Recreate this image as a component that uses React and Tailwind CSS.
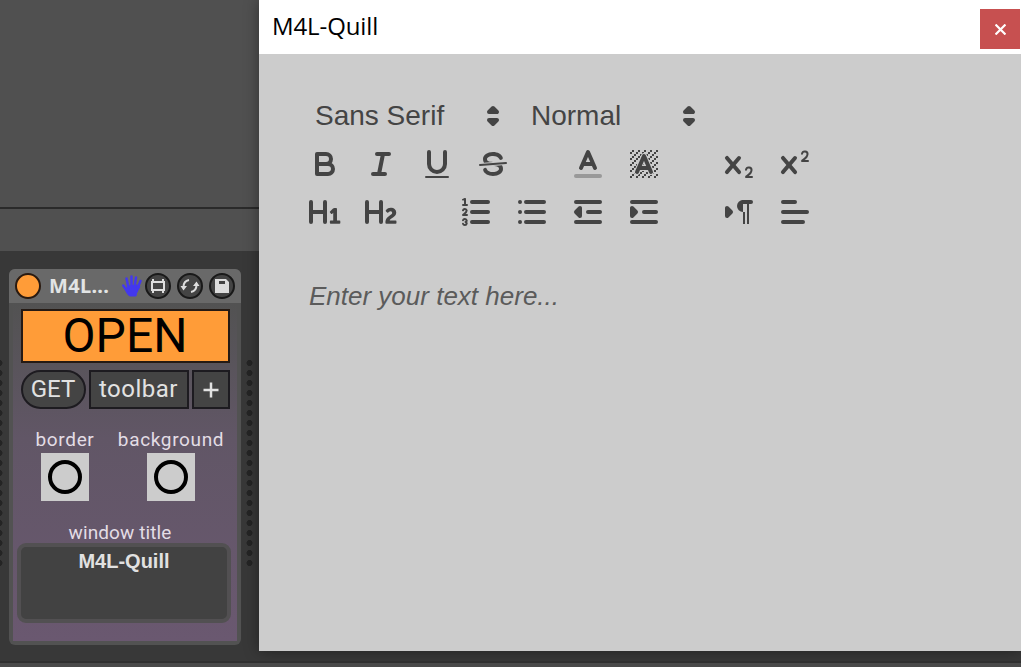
import React from "react";

const INK = "#444";
const cells = [];
for (let y = 2; y < 16; y++) for (let x = 2; x < 16; x++) if ((x + y) % 3 === 2) cells.push([x, y]);

function Icon({ children }) {
  return (
    <svg viewBox="0 0 18 18" className="size-9 shrink-0" fill="none" stroke={INK} strokeWidth="2" strokeLinecap="round" strokeLinejoin="round">
      {children}
    </svg>
  );
}

const Solid = ({ d }) => <path d={d} fill={INK} stroke="none" />;

function Picker({ label, className }) {
  return (
    <div className={`flex h-12 items-center justify-between ${className}`}>
      <span className="font-['Liberation_Sans'] text-[28px] leading-9 text-[#444]">{label}</span>
      <Icon>
        <path d="M7 11 9 13 11 11ZM7 7 9 5 11 7Z" fill={INK} />
      </Icon>
    </div>
  );
}

const H = "M9,3A1,1,0,0,0,8,4V8H3V4A1,1,0,0,0,1,4V14a1,1,0,0,0,2,0V10H8v4a1,1,0,0,0,2,0V4A1,1,0,0,0,9,3Z";
const X = "M9.65,5.241a1,1,0,0,0-1.409.108L6,7.964,3.759,5.349A1,1,0,0,0,2.192,6.59178Q2.21541,6.6213,2.241,6.649L4.684,9.5,2.241,12.35A1,1,0,0,0,3.71,13.70722q.02557-.02768.049-.05722L6,11.036,8.241,13.65a1,1,0,1,0,1.567-1.24277Q9.78459,12.3777,9.759,12.35L7.316,9.5,9.759,6.651A1,1,0,0,0,9.65,5.241Z";

function Toolbar() {
  return (
    <div className="flex flex-col pl-12">
      <div className="flex">
        <Picker label="Sans Serif" className="w-[204px] pl-2" />
        <Picker label="Normal" className="ml-3 w-[184px] pl-2" />
      </div>
      <div className="flex h-12 items-center gap-5">
        <Icon>
          <path d="M5,4H9.5A2.5,2.5,0,0,1,12,6.5v0A2.5,2.5,0,0,1,9.5,9H5Z" />
          <path d="M5,9h5.5A2.5,2.5,0,0,1,13,11.5v0A2.5,2.5,0,0,1,10.5,14H5Z" />
        </Icon>
        <Icon><path d="M7 4H13M5 14H11M8 14 10 4" /></Icon>
        <Icon>
          <path d="M5,3V9a4,4,0,0,0,4,4A4,4,0,0,0,13,9V3" />
          <rect x="3" y="15" width="12" height="1" rx=".5" fill={INK} stroke="none" />
        </Icon>
        <Icon>
          <path d="M15.5 8.5 2.5 9.5" strokeWidth="1" />
          <Solid d="M9.007,8C6.542,7.791,6,7.519,6,6.5,6,5.792,7.283,5,9,5c1.571,0,2.765.679,2.969,1.309a1,1,0,0,0,1.9-.617C13.356,4.106,11.354,3,9,3,6.2,3,4,4.538,4,6.5a3.2,3.2,0,0,0,.5,1.843Z" />
          <Solid d="M8.984,10C11.457,10.208,12,10.479,12,11.5c0,.708-1.283,1.5-3,1.5-1.571,0-2.765-.679-2.969-1.309a1,1,0,1,0-1.9.617C4.644,13.894,6.646,15,9,15c2.8,0,5-1.538,5-3.5a3.2,3.2,0,0,0-.5-1.843Z" />
        </Icon>
        <div className="ml-[39px] flex gap-5">
          <Icon>
            <path d="M3 15H15" stroke="#999" />
            <path d="M5.5 11 9 3 12.5 11M11.63 9H6.38" />
          </Icon>
          <Icon>
            <g fill={INK} stroke="none" shapeRendering="crispEdges">
              {cells.map(([x, y]) => <rect key={`${x}-${y}`} x={x} y={y} width="1" height="1" />)}
            </g>
            <path d="M5.5 13 9 5 12.5 13M11.63 11H6.38" stroke="#ccc" strokeWidth="3" />
            <path d="M5.5 13 9 5 12.5 13M11.63 11H6.38" />
          </Icon>
        </div>
        <div className="ml-[39px] flex gap-5">
          <Icon>
            <Solid d={X} />
            <Solid d="M15.5,15H13.861a3.858,3.858,0,0,0,1.914-2.975,1.8,1.8,0,0,0-1.6-1.751A1.921,1.921,0,0,0,12.021,11.7a.5.5,0,1,0,.957.291h0a.914.914,0,0,1,1.053-.725,.81.81,0,0,1,.744.762c0,1.076-1.16971,1.86982-1.93971,2.43082A1.45639,1.45639,0,0,0,12,15.5a.5.5,0,0,0,.5.5h3A.5.5,0,0,0,15.5,15Z" />
          </Icon>
          <Icon>
            <Solid d={X} />
            <Solid d="M15.5,7H13.861a4.015,4.015,0,0,0,1.914-2.975,1.8,1.8,0,0,0-1.6-1.751A1.922,1.922,0,0,0,12.021,3.7a.5.5,0,1,0,.957.291,.917.917,0,0,1,1.053-.725,.81.81,0,0,1,.744.762c0,1.077-1.164,1.925-1.934,2.486A1.423,1.423,0,0,0,12,7.5a.5.5,0,0,0,.5.5h3A.5.5,0,0,0,15.5,7Z" />
          </Icon>
        </div>
      </div>
      <div className="flex h-12 items-center gap-5">
        <Icon>
          <Solid d={H} />
          <Solid d="M16.06787,13.209H14.98975V7.59863a.54085.54085,0,0,0-.605-.60547h-.62744a1.01119,1.01119,0,0,0-.748.29688L11.645,8.56641a.5435.5435,0,0,0-.022.8584l.28613.30762a.53861.53861,0,0,0,.84717.0332l.09912-.08789a1.2137,1.2137,0,0,0,.2417-.35254h.02246s-.01123.30859-.01123.60547V13.209H12.041a.54085.54085,0,0,0-.605.60547v.43945a.54085.54085,0,0,0,.605.60547h4.02686a.54085.54085,0,0,0,.605-.60547v-.43945A.54085.54085,0,0,0,16.06787,13.209Z" />
        </Icon>
        <Icon>
          <Solid d={H} />
          <Solid d="M16.73975,13.81445v.43945a.54085.54085,0,0,1-.605.60547H11.855a.58392.58392,0,0,1-.64893-.60547V14.0127c0-2.90527,3.39941-3.42187,3.39941-4.55469a.77675.77675,0,0,0-.84717-.78125,1.17684,1.17684,0,0,0-.83594.38477c-.2749.26367-.561.374-.85791.13184l-.4292-.34082c-.30811-.24219-.38525-.51758-.1543-.81445a2.97155,2.97155,0,0,1,2.45361-1.17676,2.45393,2.45393,0,0,1,2.68408,2.40918c0,2.45312-3.1792,2.92676-3.27832,3.93848h2.79443A.54085.54085,0,0,1,16.73975,13.81445Z" />
        </Icon>
        <div className="ml-[39px] flex gap-5">
          <Icon>
            <path d="M7 4H15M7 9H15M7 14H15" />
            <path d="M2.5 5.5H4.5M4.5,10.5h-2c0-.234,1.85-1.076,1.85-2.234A.959.959,0,0,0,2.5,8.156M2.5,14.846a.959.959,0,0,0,1.85-.109A.7.7,0,0,0,3.75,14a.688.688,0,0,0,.6-.736,.959.959,0,0,0-1.85-.109" strokeWidth="1" />
            <Solid d="M3.5,6A.5.5,0,0,1,3,5.5V3.085l-.276.138A.5.5,0,0,1,2.053,3c-.124-.247-.023-.324.224-.447l1-.5A.5.5,0,0,1,4,2.5v3A.5.5,0,0,1,3.5,6Z" />
          </Icon>
          <Icon><path d="M6 4H15M6 9H15M6 14H15M3 4H3.01M3 9H3.01M3 14H3.01" /></Icon>
          <Icon>
            <path d="M3 14H15M3 4H15M9 9H15" />
            <path d="M5 7V11L3 9Z" fill={INK} />
          </Icon>
          <Icon>
            <path d="M3 14H15M3 4H15M9 9H15" />
            <path d="M3 7V11L5 9Z" fill={INK} />
          </Icon>
        </div>
        <div className="ml-[39px] flex gap-5">
          <Icon>
            <path d="M3 11 5 9 3 7Z" fill={INK} />
            <path d="M15 4H11" />
            <Solid d="M11,3a3,3,0,0,0,0,6h1V3ZM11,4h1V15h-1ZM13,4h1V15h-1Z" />
          </Icon>
          <Icon><path d="M3 9H15M3 14H13M3 4H9" /></Icon>
        </div>
      </div>
    </div>
  );
}

function RoundButton({ children }) {
  return (
    <span className="flex size-[26px] items-center justify-center rounded-full border-2 border-[#191919] bg-[#444]">
      <svg viewBox="0 0 22 22" className="size-[22px] shrink-0" fill="none" stroke="#ddd" strokeWidth="2">{children}</svg>
    </span>
  );
}

function Hand() {
  return (
    <svg viewBox="0 0 20 22" className="h-[22px] w-5 shrink-0" fill="#4338ee" stroke="#4338ee" strokeLinecap="round">
      <path d="M6 11 15 10 18 11.500Q15.500 16 14.500 18.500L14 21H7.500Q5 19 4 16Z" strokeWidth="1" strokeLinejoin="round" />
      <path d="M6.500 13 4.500 3.500M9.500 12V1.500M12.500 12 14 2.500M15.500 13 18.500 6M5 16 1.300 10.500" strokeWidth="2.500" />
    </svg>
  );
}

const Dots = ({ className }) => (
  <div className={`mt-[89px] h-[211px] w-[7px] shrink-0 bg-[radial-gradient(circle_at_center,#242424_2.7px,transparent_3.3px)] bg-[length:7px_10px] ${className}`} />
);

function Swatch({ label }) {
  return (
    <div className="flex flex-col items-center">
      <span className="mt-px font-[Roboto] text-[19px] leading-6 tracking-[0.65px] whitespace-nowrap text-[#e3dde5]">{label}</span>
      <span className="mt-px flex size-12 items-center justify-center bg-[#ccc]">
        <span className="size-[34px] rounded-full border-4 border-black" />
      </span>
    </div>
  );
}

function Device() {
  return (
    <div className="flex h-[376px] w-[232px] shrink-0 flex-col overflow-hidden rounded-md bg-[#525252]">
      <div className="flex h-[34px] shrink-0 items-center bg-[#696969] pl-1.5">
        <span className="size-[26px] rounded-full border-2 border-[#2a1a10] bg-[#ff9c38]" />
        <span className="ml-2 w-[73px] font-['Noto_Sans'] text-[20px] leading-[34px] font-bold tracking-[0.3px] text-[#e2e4e4]">M4L...</span>
        <Hand />
        <div className="ml-[3px] flex gap-1.5">
          <RoundButton>
            <path d="M5 7H17V15H5ZM6 4V7M16 4V7M6 15V18M16 15V18" />
          </RoundButton>
          <RoundButton>
            <path d="M4.500 12Q4.500 6 10 5M17.500 10Q17.500 16 12 17" />
            <path d="M1.500 11H8L4.500 15.500ZM14 11H20.500L17.500 6.500Z" fill="#ddd" stroke="none" />
          </RoundButton>
          <RoundButton>
            <path d="M4 4H15L18 7V18H4ZM8 6V9H14V6Z" fill="#ddd" fillRule="evenodd" stroke="none" />
          </RoundButton>
        </div>
      </div>
      <div className="mx-1 mb-1 flex flex-1 flex-col items-center bg-linear-to-b from-[#525252] via-[#615666] via-40% to-[#6a5870] pt-1.5">
        <div className="flex h-[54px] w-[209px] items-center justify-center border-2 border-[#251a14] bg-[#ff9c38] font-[Roboto] text-[48px] leading-none text-black">OPEN</div>
        <div className="mt-[7px] flex h-[39px] w-[209px] font-[Roboto] text-[24px] text-[#e2e2e2]">
          <span className="flex w-[65px] items-center justify-center rounded-full border-2 border-[#1d1b20] bg-[#444] pb-0.5">GET</span>
          <span className="ml-[3px] flex w-[100px] items-center justify-center border-2 border-[#1d1b20] bg-[#444] pb-0.5 tracking-[0.5px]">toolbar</span>
          <span className="ml-[3px] flex flex-1 items-center justify-center border-2 border-[#1d1b20] bg-[#444]">
            <svg viewBox="0 0 16 16" className="size-4" stroke="#e2e2e2" strokeWidth="2.500"><path d="M8 .5V15.500M.5 8H15.500" /></svg>
          </span>
        </div>
        <div className="mt-[18px] mr-3.5 grid w-[212px] shrink-0 grid-cols-2">
          <Swatch label="border" />
          <Swatch label="background" />
        </div>
        <div className="mt-5 mr-2.5 font-[Roboto] text-[19px] leading-6 tracking-[0.1px] text-[#e3dde5]">window title</div>
        <div className="-mt-0.5 mr-0.5 flex h-20 w-[214px] shrink-0 justify-center rounded-[9px] border-4 border-[#525052] bg-[#424242] font-['Liberation_Sans'] text-[20px] leading-[29px] font-bold text-[#e1e1e1]">M4L-Quill</div>
      </div>
    </div>
  );
}

export default function App() {
  return (
    <div className="flex h-[667px] w-[1021px] flex-col overflow-hidden bg-[#383838]">
      <div className="flex h-[661px]">
        <aside className="flex w-[259px] shrink-0 flex-col">
          <div className="h-[207px] bg-[#505050]" />
          <div className="h-0.5 bg-[#2a2a2a]" />
          <div className="h-[42px] bg-[#505050]" />
          <div className="flex flex-1 pt-[18px]">
            <div className="flex w-[9px] shrink-0 overflow-hidden"><Dots className="-ml-1" /></div>
            <Device />
            <Dots className="ml-[5px]" />
          </div>
        </aside>
        <main className="flex h-[651px] w-[762px] flex-col bg-[#ccc] shadow-[0_0_14px_rgba(0,0,0,0.4)]">
          <header className="flex h-[54px] items-start justify-between bg-white pl-[13px]">
            <h1 className="font-['Open_Sans'] text-[24px] leading-[52px] tracking-[-0.1px] text-black">M4L-Quill</h1>
            <span className="mt-[9px] mr-px flex size-10 items-center justify-center bg-[#c75050]">
              <svg viewBox="0 0 10 10" className="size-[11px]" stroke="#fff" strokeWidth="2"><path d="M.5 .5 9.500 9.500M9.500 .5 .5 9.500" /></svg>
            </span>
          </header>
          <div className="pt-[38px]"><Toolbar /></div>
          <p className="mt-[42px] ml-[50px] font-['Liberation_Sans'] text-[26px] leading-9 text-[#5b5b5b] italic">Enter your text here...</p>
        </main>
      </div>
      <div className="h-0.5 bg-[#303030]" />
      <div className="flex-1 bg-[#4a4a4a]" />
    </div>
  );
}
